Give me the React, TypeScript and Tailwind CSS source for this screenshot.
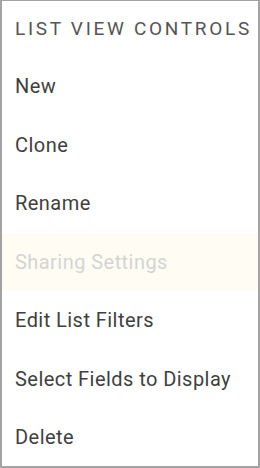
const items = [
  { label: 'New' },
  { label: 'Clone' },
  { label: 'Rename' },
  { label: 'Sharing Settings', disabled: true },
  { label: 'Edit List Filters' },
  { label: 'Select Fields to Display' },
  { label: 'Delete' },
];

export default function App() {
  return (
    <div className="h-[468px] w-[260px] overflow-hidden border-2 border-t border-[#a3a3a3] bg-white font-['Roboto',sans-serif]">
      <div className="flex h-[56px] items-center whitespace-nowrap px-[13px] text-[19px] tracking-[2.7px] text-[#555]">
        LIST VIEW CONTROLS
      </div>
      <ul>
        {items.map((item) => (
          <li
            key={item.label}
            className={
              item.disabled
                ? 'flex h-[58.5px] items-center whitespace-nowrap bg-[#fffcf3] px-[13px] text-[20px] tracking-[0.45px] text-[#d4d4d4]'
                : 'flex h-[58.5px] items-center whitespace-nowrap px-[13px] text-[20px] tracking-[0.45px] text-[#3f3f3f]'
            }
          >
            {item.label}
          </li>
        ))}
      </ul>
    </div>
  );
}
